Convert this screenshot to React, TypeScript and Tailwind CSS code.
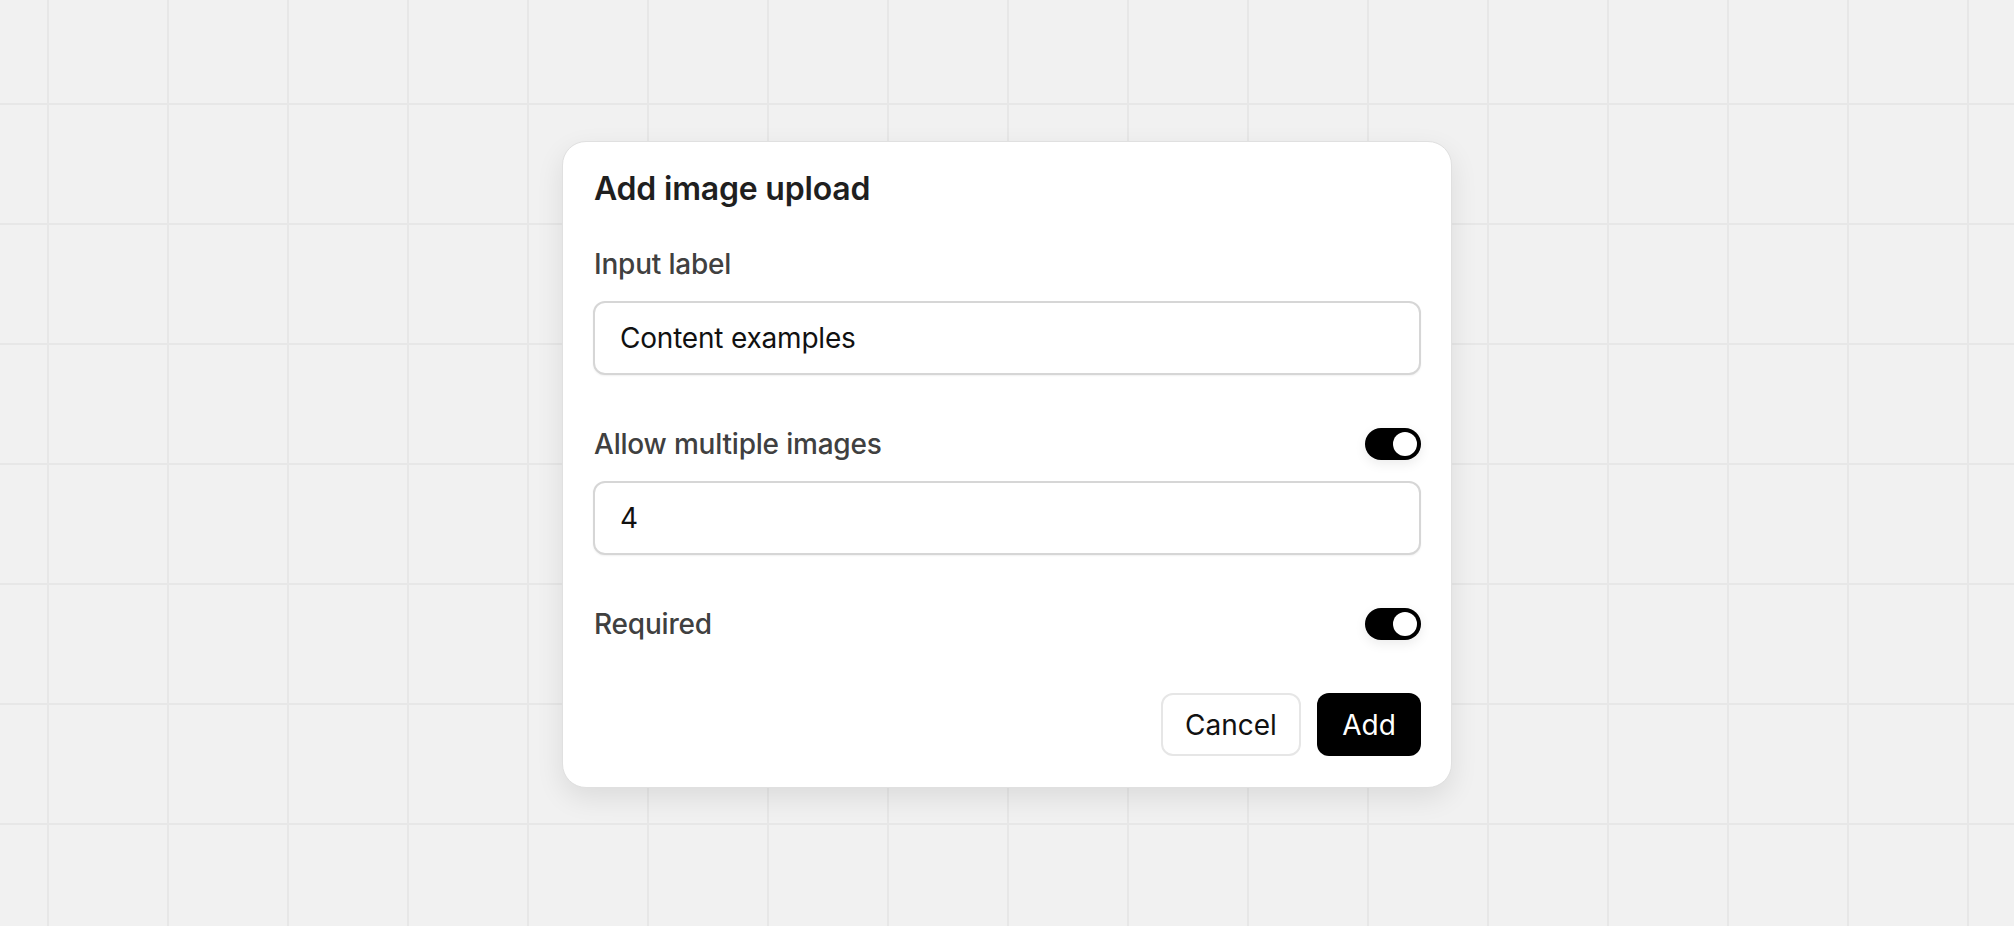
export default function App() {
  return (
    <div
      className="min-h-screen w-full bg-[#f1f1f1] bg-[linear-gradient(to_right,#e7e7e7_2px,transparent_2px),linear-gradient(to_bottom,#e7e7e7_2px,transparent_2px)] bg-[size:120px_120px] bg-[position:47px_103px] flex justify-center pt-[141px]"
      style={{ fontFamily: 'Inter, "Noto Sans", sans-serif' }}
    >
      {/* Dialog */}
      <div className="w-[890px] h-fit bg-white border border-[#e0e0e0] rounded-[24px] shadow-[0_10px_28px_rgba(0,0,0,0.09)] px-[30px] pt-[27px] pb-[31px] flex flex-col">
        <h2 className="pl-[1px] text-[32px] leading-[40px] font-semibold text-[#1f1f1f] tracking-[-0.2px]">
          Add image upload
        </h2>

        <label className="mt-[35px] pl-[1px] text-[28px] leading-[40px] font-medium text-[#404040] tracking-[-0.2px]">
          Input label
        </label>
        <div className="mt-[17px] h-[74px] rounded-[12px] border-2 border-[#d6d6d6] bg-white shadow-[0_1px_2px_rgba(0,0,0,0.06)] flex items-center pl-[25px] text-[28px] text-[#111111] tracking-[-0.2px]">
          Content examples
        </div>

        <div className="mt-[49px] h-[40px] flex items-center justify-between">
          <span className="pl-[1px] text-[28px] leading-[40px] font-medium text-[#404040] tracking-[-0.2px]">Allow multiple images</span>
          <Toggle />
        </div>
        <div className="mt-[17px] h-[74px] rounded-[12px] border-2 border-[#d6d6d6] bg-white shadow-[0_1px_2px_rgba(0,0,0,0.06)] flex items-center pl-[25px] text-[28px] text-[#111111]">
          4
        </div>

        <div className="mt-[49px] h-[40px] flex items-center justify-between">
          <span className="pl-[1px] text-[28px] leading-[40px] font-medium text-[#404040] tracking-[-0.2px]">Required</span>
          <Toggle />
        </div>

        <div className="mt-[49px] flex justify-end gap-[16px]">
          <button className="h-[63px] w-[140px] rounded-[12px] border-2 border-[#e6e6e6] bg-white text-[28px] text-[#111111]">
            Cancel
          </button>
          <button className="h-[63px] w-[104px] rounded-[12px] bg-black text-[28px] text-white">
            Add
          </button>
        </div>
      </div>
    </div>
  );
}

function Toggle() {
  return (
    <div className="w-[56px] h-[32px] rounded-full bg-black flex items-center justify-end pr-[4px] shadow-[0_4px_12px_rgba(0,0,0,0.08)]">
      <div className="w-[24px] h-[24px] rounded-full bg-white" />
    </div>
  );
}
